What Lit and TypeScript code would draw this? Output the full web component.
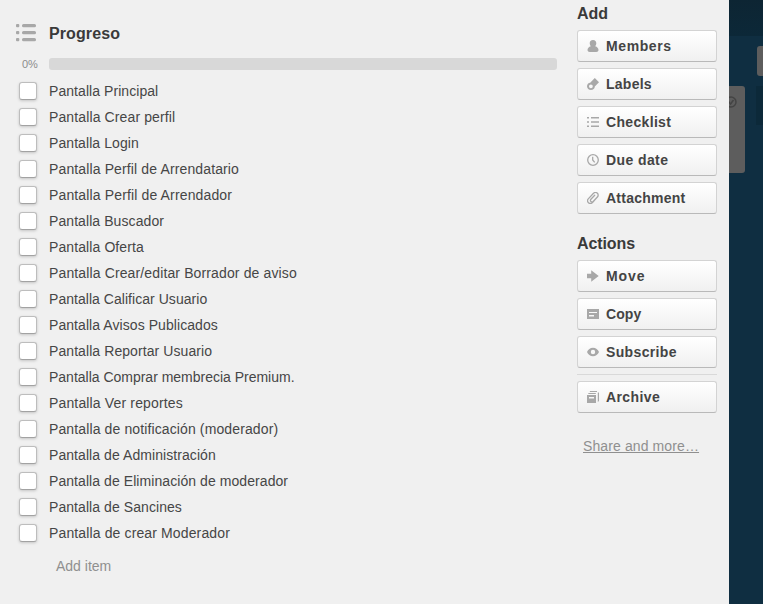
import { LitElement, html, css, svg } from "lit";
import { customElement } from "lit/decorators.js";
import { styleMap } from "lit/directives/style-map.js";

type Entry = [label: string, tracking: number];

const ITEMS: Entry[] = [
  ["Pantalla Principal", 0.06],
  ["Pantalla Crear perfil", 0.12],
  ["Pantalla Login", 0.08],
  ["Pantalla Perfil de Arrendatario", 0.13],
  ["Pantalla Perfil de Arrendador", 0.14],
  ["Pantalla Buscador", 0.08],
  ["Pantalla Oferta", 0.1],
  ["Pantalla Crear/editar Borrador de aviso", 0.13],
  ["Pantalla Calificar Usuario", 0.04],
  ["Pantalla Avisos Publicados", 0.07],
  ["Pantalla Reportar Usuario", 0.08],
  ["Pantalla Comprar membrecia Premium.", -0.01],
  ["Pantalla Ver reportes", 0.15],
  ["Pantalla de notificación (moderador)", 0.12],
  ["Pantalla de Administración", 0.07],
  ["Pantalla de Eliminación de moderador", 0.07],
  ["Pantalla de Sancines", 0.07],
  ["Pantalla de crear Moderador", 0.13],
];

const ADD: Entry[] = [
  ["Members", 0.6],
  ["Labels", 0.25],
  ["Checklist", 0.33],
  ["Due date", 0.4],
  ["Attachment", 0.25],
];
const ACTIONS: Entry[] = [
  ["Move", 0.95],
  ["Copy", 0.1],
  ["Subscribe", 0.35],
];

const ICONS: Record<string, unknown> = {
  Members: svg`<path d="M6 0C8.200 0 9.300 1.500 9.300 3.300c0 1.200-.5 2.200-1.100 3 1.900.7 3.300 1.900 3.300 3.800C11.500 11.300 10.500 12 9.300 12H2.700C1.500 12 .5 11.300 .5 10.100.5 8.200 1.900 7 3.800 6.300 3.200 5.500 2.700 4.500 2.700 3.300 2.700 1.500 3.800 0 6 0z"/>`,
  Labels: svg`<path fill-rule="evenodd" d="M7.800 0 12 4.300 7.800 8.400C7.800 10.400 6 12 4 12 1.800 12 0 10.400 0 8.300 0 6.300 1.400 4.900 3.200 4.700zM3.900 6.400a1.900 1.900 0 1 0 0 3.800 1.900 1.900 0 0 0 0-3.800z"/>`,
  Checklist: svg`<path d="M0 1h2v1.500H0zM4 1h8v1.500H4zM0 5.200h2v1.500H0zM4 5.200h8v1.500H4zM0 9.400h2v1.500H0zM4 9.400h8v1.500H4z"/>`,
  "Due date": svg`<g fill="none" stroke="#a8a8a8" stroke-width="1.3"><circle cx="6" cy="6" r="5.300"/><path d="M5.700 2.800V6l2 2.400"/></g>`,
  Attachment: svg`<path fill="none" stroke="#a8a8a8" stroke-width="1.300" stroke-linecap="round" d="M9.200 6.400 5.700 10.300C4.500 11.600 2.700 11.800 1.500 10.700.3 9.600.4 7.800 1.500 6.600L6.300 1.500C7.400.3 9 .2 10.200 1.100c1.200 1 1.300 2.700.2 3.900L6.200 9.400C5.500 10.100 4.600 10.200 3.900 9.600 3.200 9 3.200 8.100 3.900 7.300L7.700 3.300"/>`,
  Move: svg`<path d="M0 3.800h4.200V.3L11.700 6 4.200 11.700V8.200H0z"/>`,
  Copy: svg`<path fill-rule="evenodd" d="M0 1h12v10H0zM2 4v1h8V4zM2 7v1.500h5V7z"/>`,
  Subscribe: svg`<path fill-rule="evenodd" d="M6 1.700C8.800 1.700 10.900 3.500 12 6 10.900 8.500 8.800 10.300 6 10.300S1.100 8.500 0 6C1.100 3.500 3.200 1.700 6 1.700zM6 3.800a2.200 2.200 0 1 0 0 4.400 2.200 2.200 0 0 0 0-4.400z"/>`,
  Archive: svg`<path fill-rule="evenodd" d="M0 4h9v8H0zM2 6v1.500h5V6zM1.500 2h7.300v1H1.200zM3 0h7v1H2.700zM10.800 1.500H12V10l-1.200 1z"/>`,
};

@customElement("app-root")
export class AppRoot extends LitElement {
  static styles = css`
    :host {
      display: flex;
      width: 763px;
      height: 604px;
      overflow: hidden;
      background: #0f2e41;
      font: 14px/18px "Liberation Sans", Arial, sans-serif;
      color: #464646;
    }
    * { box-sizing: border-box; }
    .window { display: flex; flex: none; width: 729px; height: 604px; background: #f0f0f0; }
    .main { width: 577px; padding-top: 22px; }
    .head { display: flex; align-items: center; height: 22px; padding-left: 16px; }
    .list-icon { width: 21px; height: 20px; fill: #a8a8a8; margin-right: 12px; }
    h2, h3 { margin: 0; font-size: 16px; line-height: 20px; font-weight: bold; color: #3a3a3a; }
    h2 { padding-top: 2px; letter-spacing: .1px; }
    .progress { display: flex; align-items: center; height: 12px; margin-top: 14px; }
    .percent { width: 49px; padding-left: 22px; font-size: 11px; line-height: 12px; color: #8c8c8c; }
    .track { width: 508px; height: 12px; border-radius: 3px; background: #d8d8d8; }
    ul { list-style: none; margin: 8px 0 0; padding: 0; }
    li { display: flex; align-items: center; height: 26px; padding-left: 19px; white-space: nowrap; }
    .check {
      width: 18px; height: 18px; margin-right: 12px; border-radius: 3px;
      background: #fff; border: 1px solid #bdbdbd; border-bottom-color: #a2a2a2;
      box-shadow: 0 1px 3px rgba(0, 0, 0, .18);
    }
    .new-item { margin: 11px 0 0 56px; color: #8f8f8f; }
    .side { width: 140px; padding-top: 4px; }
    .side h3 { margin-bottom: 6px; }
    .button {
      display: flex; align-items: center; width: 140px; height: 32px; margin: 0 0 6px;
      padding: 0 0 0 9px; border: 1px solid #d3d3d3; border-bottom-color: #b9b9b9;
      border-radius: 3px; background: linear-gradient(#fff, #f0f0f0);
      font: bold 14px/18px "Liberation Sans", Arial, sans-serif; color: #444;
    }
    .button svg { width: 12px; height: 12px; margin-right: 7px; fill: #a8a8a8; }
    .side .actions { margin-top: 20px; letter-spacing: -.1px; }
    .rule { height: 1px; background: #d9d9d9; margin-bottom: 6px; }
    .share { display: inline-block; margin: 18px 0 0 6px; color: #8f8f8f; text-decoration: underline; letter-spacing: .11px; white-space: nowrap; }
    .board { position: relative; flex: 1; overflow: hidden; background: #0f2e41; }
    .bar { height: 36px; background: linear-gradient(#0d2533, #0c2838); }
    .tile { position: absolute; background: #5d5d5d; border-radius: 3px; }
    .tab { left: 28px; top: 46px; width: 12px; height: 30px; }
    .card { left: -8px; top: 86px; width: 24px; height: 87px; }
    .card svg { position: absolute; left: 4px; top: 10px; width: 12px; height: 12px; }
    .shade { position: absolute; left: 27px; top: 86px; width: 8px; height: 39px; background: #0c2939; }
  `;

  private button([label, tracking]: Entry) {
    return html`<button class="button">
      <svg viewBox="0 0 12 12">${ICONS[label]}</svg><span style=${styleMap({ letterSpacing: `${tracking}px` })}>${label}</span>
    </button>`;
  }

  render() {
    return html`
      <div class="window">
        <section class="main">
          <div class="head">
            <svg class="list-icon" viewBox="0 0 21 20">
              <rect x="0" y="1" width="3.300" height="3.300" rx="1"/><rect x="6" y="1" width="14" height="3.300" rx="1.500"/>
              <rect x="0" y="8" width="3.300" height="3.300" rx="1"/><rect x="6" y="8" width="14" height="3.300" rx="1.500"/>
              <rect x="0" y="15" width="3.300" height="3.300" rx="1"/><rect x="6" y="15" width="14" height="3.300" rx="1.500"/>
            </svg>
            <h2>Progreso</h2>
          </div>
          <div class="progress"><span class="percent">0%</span><div class="track"></div></div>
          <ul>
            ${ITEMS.map(([label, tracking]) => html`<li><span class="check"></span><span style=${styleMap({ letterSpacing: `${tracking}px` })}>${label}</span></li>`)}
          </ul>
          <div class="new-item">Add item</div>
        </section>
        <aside class="side">
          <h3>Add</h3>
          ${ADD.map((e) => this.button(e))}
          <h3 class="actions">Actions</h3>
          ${ACTIONS.map((e) => this.button(e))}
          <div class="rule"></div>
          ${this.button(["Archive", 0.4])}
          <a class="share">Share and more…</a>
        </aside>
      </div>
      <div class="board">
        <div class="bar"></div>
        <div class="shade"></div>
        <div class="tile tab"></div>
        <div class="tile card">
          <svg viewBox="0 0 12 12" fill="none" stroke="#444" stroke-width="1.500"><circle cx="6" cy="6" r="5"/><path d="M3.500 5.500 5.600 8 8.500 4"/></svg>
        </div>
      </div>
    `;
  }
}
